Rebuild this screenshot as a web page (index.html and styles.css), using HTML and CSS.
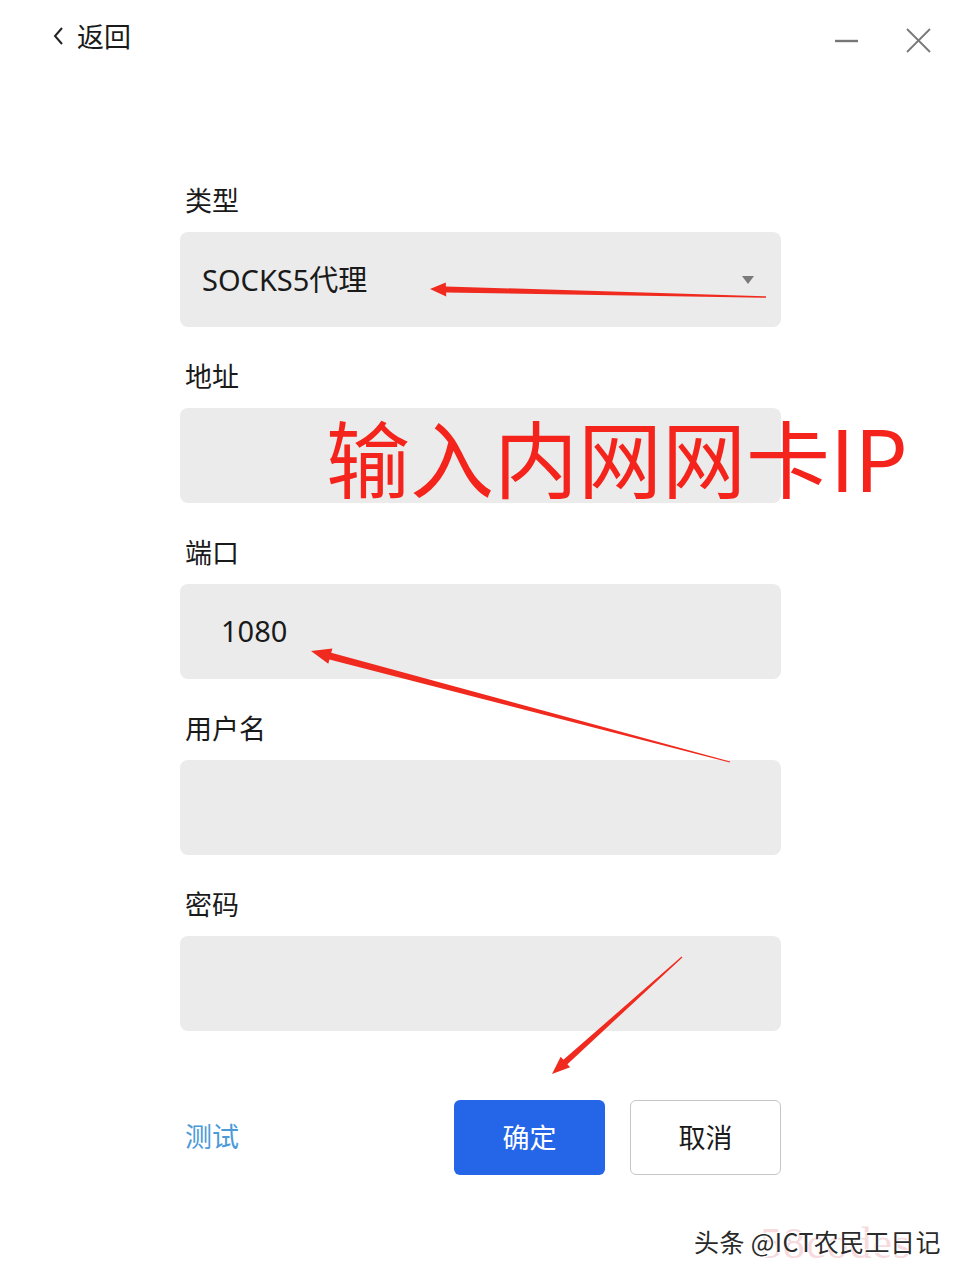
FILE: index.html
```html
<html>
  <head>
    <title>代理设置</title>
    <link rel="stylesheet" href="styles.css">
  </head>
  <body>
    <div id="page">
      <div class="topbar">
        <div class="back">
          <svg width="14" height="20" viewBox="0 0 14 20"><polyline points="10,2 3,10 10,18" fill="none" stroke="#222" stroke-width="2"/></svg>
          <span>返回</span>
        </div>
        <div class="winctl">
          <svg width="24" height="24" viewBox="0 0 24 24"><line x1="0" y1="12" x2="23" y2="12" stroke="#777" stroke-width="2.4"/></svg>
          <svg width="26" height="26" viewBox="0 0 26 26"><line x1="1" y1="1" x2="24" y2="24" stroke="#777" stroke-width="1.8"/><line x1="24" y1="1" x2="1" y2="24" stroke="#777" stroke-width="1.8"/></svg>
        </div>
      </div>

      <div class="form">
        <div class="group">
          <div class="label">类型</div>
          <div class="field select">
            <span class="value">SOCKS5代理</span>
            <span class="caret"></span>
          </div>
        </div>
        <div class="group">
          <div class="label">地址</div>
          <div class="field"></div>
        </div>
        <div class="group">
          <div class="label">端口</div>
          <div class="field port"><span class="value">1080</span></div>
        </div>
        <div class="group">
          <div class="label">用户名</div>
          <div class="field"></div>
        </div>
        <div class="group">
          <div class="label">密码</div>
          <div class="field"></div>
        </div>

        <div class="actions">
          <a class="test">测试</a>
          <button class="btn ok">确定</button>
          <button class="btn cancel">取消</button>
        </div>
      </div>

      <div class="note">输入内网网卡IP</div>

      <svg class="arrows" width="960" height="1276" viewBox="0 0 960 1276">
        <polygon points="430,289 445.8,282.4 445.9,286.4 766,296.3 766,297.7 446.1,292.4 446.2,296.4" />
        <polygon points="311,651 332.4,648.4 331.2,652.7 730.15,761.42 729.85,762.58 329.4,659.5 328.3,663.8" />
        <polygon points="552,1074 560.7,1056.8 563.4,1059.8 681.6,956.55 682.4,957.45 567.4,1064.2 570.1,1067.2" />
      </svg>

      <div class="mark">
        <span class="mark-bg">58codes</span>
        <span class="mark-fg">头条 @ICT农民工日记</span>
      </div>
    </div>
  </body>
</html>
```

FILE: styles.css
```css
body {
  margin: 0;
  background: #fff;
  font-family: "Noto Sans", "Noto Sans CJK SC", sans-serif;
  color: #1a1a1a;
}
#page {
  position: relative;
  width: 960px;
  height: 1276px;
  overflow: hidden;
}
.topbar {
  height: 74px;
  display: flex;
  align-items: center;
  justify-content: space-between;
  padding: 0 28px 0 52px;
}
.back {
  display: flex;
  align-items: center;
  gap: 11px;
  font-size: 27px;
  line-height: 36px;
  color: #1a1a1a;
}
.back svg {
  margin-top: -2px;
}
.winctl {
  display: flex;
  align-items: center;
  gap: 47px;
  margin-top: 8px;
}
.form {
  width: 601px;
  margin: 109px 0 0 180px;
  display: flex;
  flex-direction: column;
  gap: 32px;
}
.label {
  font-size: 27px;
  line-height: 36px;
  padding-left: 5px;
  color: #1a1a1a;
}
.field {
  margin-top: 13px;
  height: 95px;
  background: #ebebeb;
  border-radius: 8px;
  display: flex;
  align-items: center;
  padding: 0 27px 0 22px;
  box-sizing: border-box;
}
.field .value {
  font-size: 29px;
  color: #1a1a1a;
  margin-top: -3px;
}
.select {
  justify-content: space-between;
}
.caret {
  width: 0;
  height: 0;
  border-left: 6px solid transparent;
  border-right: 6px solid transparent;
  border-top: 8px solid #7a7a7a;
}
.port {
  padding-left: 41px;
}
.actions {
  margin-top: 37px;
  display: flex;
  align-items: center;
  gap: 25px;
}
.test {
  flex: 1;
  font-size: 27px;
  color: #4a9ad8;
  padding-left: 5px;
  margin-top: -4px;
}
.btn {
  width: 151px;
  height: 75px;
  border-radius: 6px;
  font-family: "Noto Sans", "Noto Sans CJK SC", sans-serif;
  font-size: 27px;
  cursor: pointer;
  padding: 0 0 3px;
}
.ok {
  background: #2565e8;
  color: #fff;
  border: none;
}
.cancel {
  background: #fff;
  color: #1a1a1a;
  border: 1.5px solid #c6c6c6;
}
.note {
  position: absolute;
  left: 326px;
  top: 414px;
  font-family: "Noto Sans CJK SC", sans-serif;
  font-size: 84px;
  line-height: 84px;
  color: #f4231b;
  white-space: nowrap;
}
.arrows {
  position: absolute;
  left: 0;
  top: 0;
  pointer-events: none;
}
.arrows polygon {
  fill: #f02a1e;
}
.mark {
  position: absolute;
  left: 694px;
  top: 1224px;
  width: 266px;
  height: 40px;
}
.mark-bg {
  position: absolute;
  left: 66px;
  top: -6px;
  font-family: "Liberation Serif", serif;
  font-size: 44px;
  color: rgba(230, 150, 160, 0.35);
  letter-spacing: 1px;
}
.mark-fg {
  position: absolute;
  left: 0;
  top: 1px;
  font-family: "Noto Sans CJK SC", sans-serif;
  font-size: 25px;
  line-height: 32px;
  letter-spacing: 0.4px;
  color: #2a2a2a;
  white-space: nowrap;
  text-shadow: 1px 1px 0 #fff, -1px -1px 0 #fff;
}
```
